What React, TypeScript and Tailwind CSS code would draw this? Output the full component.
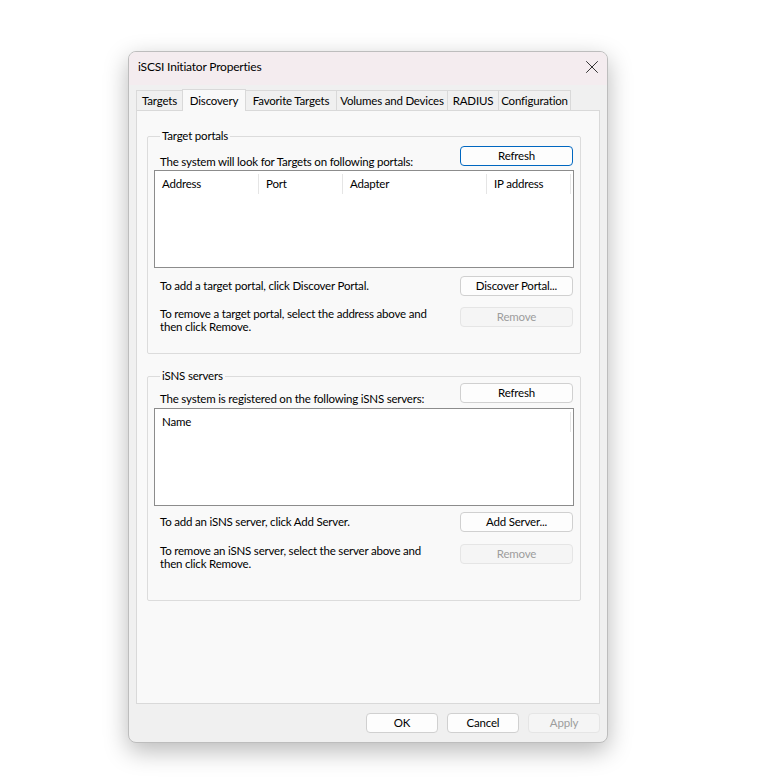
import { X } from "lucide-react";

type BtnProps = {
  label: string;
  disabled?: boolean;
  focused?: boolean;
  className?: string;
};

function Btn({ label, disabled, focused, className = "w-[113px]" }: BtnProps) {
  return (
    <button
      disabled={disabled}
      className={
        "h-[20px] shrink-0 rounded-[4px] border leading-none " +
        className +
        " " +
        (disabled
          ? "border-[#e5e5e5] bg-[#f5f5f5] text-[#9d9d9d]"
          : focused
            ? "border-[#0067c0] bg-[#fdfdfd] text-black"
            : "border-[#d0d0d0] bg-[#fdfdfd] text-black")
      }
    >
      {label}
    </button>
  );
}

const TABS = [
  { name: "Targets", w: "w-[47px]" },
  { name: "Discovery", w: "w-[64px]" },
  { name: "Favorite Targets", w: "w-[92px]" },
  { name: "Volumes and Devices", w: "w-[112px]" },
  { name: "RADIUS", w: "w-[52px]" },
  { name: "Configuration", w: "w-[73px]" },
];

function Tabs() {
  return (
    <div className="flex h-[21px] items-end whitespace-nowrap">
      {TABS.map((tab) =>
        tab.name === "Discovery" ? (
          <div
            key={tab.name}
            className={
              "relative z-10 -mb-px -ml-px flex h-[22px] items-start justify-center border border-b-0 border-[#d9d9d9] bg-[#f9f9f9] pt-[2px] " +
              tab.w
            }
          >
            {tab.name}
          </div>
        ) : (
          <div
            key={tab.name}
            className={
              "-ml-px flex h-[20px] items-center justify-center border border-b-0 border-[#d9d9d9] bg-[#f0f0f0] pt-[1px] first:ml-0 " +
              tab.w
            }
          >
            {tab.name}
          </div>
        )
      )}
    </div>
  );
}

function ListHeader({ cols }: { cols: { name: string; w: string }[] }) {
  return (
    <div className="flex h-[23px] pt-[3px]">
      {cols.map((c) => (
        <div key={c.name} className={"flex items-center border-r border-[#e5e5e5] pl-[7px] " + c.w}>
          {c.name}
        </div>
      ))}
    </div>
  );
}

export default function App() {
  return (
    <div
      className="min-h-[784px] bg-white pl-[128px] pt-[51px] text-[11.5px] tracking-[-0.2px] text-black"
      style={{ fontFamily: 'Lato, "Noto Sans", sans-serif' }}
    >
      <div className="flex w-[480px] flex-col overflow-hidden rounded-[8px] border border-[#bdbdbd] bg-[#f0f0f0] shadow-[0_8px_24px_rgba(0,0,0,0.28)]">
        {/* title bar */}
        <div className="flex h-[33px] items-center justify-between bg-[#f4ecef] pb-[3px] pl-[9px] pr-[4px]">
          <span className="text-[12px]">iSCSI Initiator Properties</span>
          <X size={22} strokeWidth={1} className="text-[#222]" />
        </div>

        <div className="flex flex-col px-[7px] pt-[4px]">
          <Tabs />

          <div className="flex h-[594px] flex-col border border-[#d9d9d9] bg-[#f9f9f9] px-[10px] pt-[17px]">
            {/* Target portals */}
            <fieldset className="h-[226px] w-[434px] rounded-[2px] border border-[#dcdcdc] px-[6px]">
              <legend className="ml-[6px] px-[2px] leading-[16px]">Target portals</legend>
              <div className="mt-[2px] flex items-start justify-between pr-px">
                <span className="ml-[6px] mt-[8px] leading-[16px]">
                  The system will look for Targets on following portals:
                </span>
                <Btn label="Refresh" focused />
              </div>
              <div className="h-[98px] border border-[#8c8c8c] bg-white">
                <ListHeader
                  cols={[
                    { name: "Address", w: "w-[104px]" },
                    { name: "Port", w: "w-[84px]" },
                    { name: "Adapter", w: "w-[144px]" },
                    { name: "IP address", w: "w-[84px]" },
                  ]}
                />
              </div>
              <div className="mt-[8px] flex items-center justify-between pr-px">
                <span className="ml-[6px]">To add a target portal, click Discover Portal.</span>
                <Btn label="Discover Portal..." />
              </div>
              <div className="mt-[11px] flex items-start justify-between pr-px">
                <span className="ml-[6px] w-[280px] leading-[13px]">
                  To remove a target portal, select the address above and then click Remove.
                </span>
                <Btn label="Remove" disabled />
              </div>
            </fieldset>

            {/* iSNS servers */}
            <fieldset className="mt-[14px] h-[233px] w-[434px] rounded-[2px] border border-[#dcdcdc] px-[6px]">
              <legend className="ml-[6px] px-[2px] leading-[16px]">iSNS servers</legend>
              <div className="-mt-px flex items-start justify-between pr-px">
                <span className="ml-[6px] mt-[8px] leading-[16px]">
                  The system is registered on the following iSNS servers:
                </span>
                <Btn label="Refresh" />
              </div>
              <div className="mt-px h-[98px] border border-[#8c8c8c] bg-white">
                <ListHeader cols={[{ name: "Name", w: "w-[416px]" }]} />
              </div>
              <div className="mt-[6px] flex items-center justify-between pr-px">
                <span className="ml-[6px]">To add an iSNS server, click Add Server.</span>
                <Btn label="Add Server..." />
              </div>
              <div className="mt-[12px] flex items-start justify-between pr-px">
                <span className="ml-[6px] w-[280px] leading-[13px]">
                  To remove an iSNS server, select the server above and then click Remove.
                </span>
                <Btn label="Remove" disabled />
              </div>
            </fieldset>
          </div>

          {/* footer buttons */}
          <div className="flex h-[38px] items-center justify-end gap-[9px] pb-[1px]">
            <Btn label="OK" className="w-[72px]" />
            <Btn label="Cancel" className="w-[72px]" />
            <Btn label="Apply" className="w-[72px]" disabled />
          </div>
        </div>
      </div>
    </div>
  );
}
